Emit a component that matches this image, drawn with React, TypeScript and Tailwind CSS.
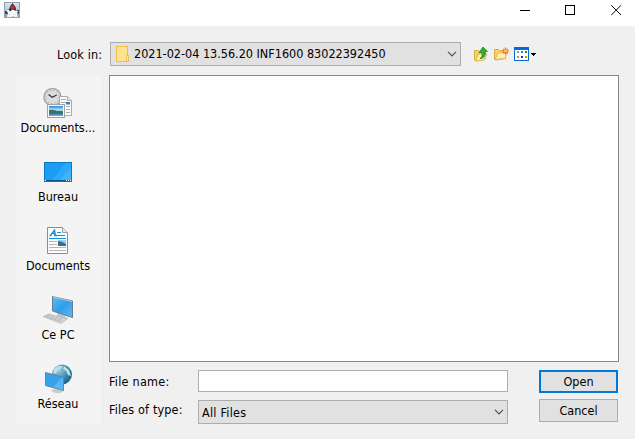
import React from 'react';

const Chevron = () => (
  <svg className="h-[6px] w-[10px] shrink-0" viewBox="0 0 10 6" fill="none">
    <path d="M1 .8 5 4.8 9 .8" stroke="#505050" strokeWidth="1.2" />
  </svg>
);

const JavaIcon = () => (
  <svg className="h-4 w-4" viewBox="0 0 16 16">
    <defs>
      <linearGradient id="jv" x1="0" y1="0" x2="0" y2="1">
        <stop offset="0" stopColor="#dce7f0" />
        <stop offset=".5" stopColor="#b5c7d6" />
        <stop offset="1" stopColor="#7f99ad" />
      </linearGradient>
    </defs>
    <rect x=".5" y=".5" width="15" height="15" fill="url(#jv)" stroke="#8fa3b5" />
    <path d="M1 9h3v3H1ZM12.500 8H15v3.500h-2.500Z" fill="#3f4347" />
    <path d="M2.500 9 5 7.500h7l2 2-1 1.500.5 4H10l-1-1-1 1H3l1-4Z" fill="#f6f7f7" />
    <path d="M5.500 7.500 6 4.500 8.500 1l3 4 1 4-3-1Z" fill="#3a3438" />
    <path d="M4.500 7.500 6.500 6l1 2-1 1.500Z" fill="#1f2124" />
    <ellipse cx="8.700" cy="5.700" rx="1.800" ry="2.100" fill="#dc2823" />
    <path d="M5 12.500h1M10.500 12.500h1" stroke="#c3c8cc" />
  </svg>
);

const RecentIcon = () => (
  <svg className="h-8 w-8" viewBox="0 0 32 32">
    <defs>
      <linearGradient id="sky" x1="0" y1="0" x2="0" y2="1">
        <stop offset="0" stopColor="#2787d8" />
        <stop offset=".42" stopColor="#c8e8f6" />
        <stop offset=".55" stopColor="#437e69" />
        <stop offset=".72" stopColor="#2467a5" />
        <stop offset="1" stopColor="#79b8df" />
      </linearGradient>
    </defs>
    <circle cx="10.500" cy="10" r="8.500" fill="#dcdddd" stroke="#a4a6a8" strokeWidth="1.500" />
    <circle cx="10.500" cy="10" r="6.500" fill="none" stroke="#999" strokeWidth="1" strokeDasharray="1 2.400" />
    <path d="m6.500 7.500 3.700 2.700 4.500-2.200" fill="none" stroke="#353535" strokeWidth="1.200" />
    <path d="M17.500 9.500h8l4 4v15h-12Z" fill="#fcfcfc" stroke="#a7a9aa" />
    <path d="M25.500 9.500v4h4" fill="#eee" stroke="#a7a9aa" />
    <path d="M19 12.500h5M19 15.500h5M24 19.500h4M24 22.500h4M24 25.500h4" stroke="#a8abad" />
    <path d="M24 15h4v2.500h-4Z" fill="#3683ba" />
    <rect x="5.500" y="17.500" width="17" height="13" fill="#fcfcfc" stroke="#a0a2a3" />
    <path d="M7 19h14v10H7Z" fill="url(#sky)" />
    <path d="M7 23q4-1 8 1l6 1v1H7Z" fill="#397567" />
  </svg>
);

const DesktopIcon = () => (
  <svg className="h-8 w-8" viewBox="0 0 32 32" shapeRendering="crispEdges">
    <rect x="2.500" y="6.500" width="27" height="19" fill="#1b9cf7" stroke="#0878bf" />
    <path d="M10 24 24 7h5v17Z" fill="#2ea8fc" />
    <path d="M18 24 29 12v12Z" fill="#42b2fd" />
    <path d="M3 24h26v1H3Z" fill="#075488" />
    <path d="M3 24h1v1H3ZM24 24h1v1h-1ZM26 24h1v1h-1ZM28 24h1v1h-1Z" fill="#fff" />
  </svg>
);

const DocumentIcon = () => (
  <svg className="h-8 w-8" viewBox="0 0 32 32">
    <path d="M5.500 2.500h15l5 5v21h-20Z" fill="#fcfcfc" stroke="#8b8d8e" />
    <path d="M20.500 2.500v5h5" fill="#e7e7e7" stroke="#9a9b9c" />
    <path d="m8.500 10.500 4-5.500 1 5.500M10 8.500h3M7.500 10.500h2M12 10.500h3" fill="none" stroke="#178bd5" strokeWidth="1.300" />
    <path d="M15 7.500h4M15 10.500h8M7 13.500h17" stroke="#1690d9" />
    <path d="M7 16.500h8M7 19.500h8M7 22.500h17M7 25.500h17" stroke="#b6b6b6" />
    <path d="M16 15h8v6h-8Z" fill="#a3cee8" />
    <path d="M16 16q4 0 8 3v2h-8Z" fill="#376f92" />
  </svg>
);

const ComputerIcon = () => (
  <svg className="h-8 w-8" viewBox="0 0 32 32">
    <defs>
      <linearGradient id="pc" x2="1" y2="1">
        <stop stopColor="#61bdf5" />
        <stop offset=".5" stopColor="#319de8" />
        <stop offset="1" stopColor="#61bafa" />
      </linearGradient>
    </defs>
    <path d="m15 21 1-3 7 2v3l4 1-4 2-9-3Z" fill="#c1c7ca" />
    <path d="M10.500 2.500 30.500 7v16.500l-20-6.500Z" fill="url(#pc)" stroke="#697c88" />
    <path d="m11 3 19 4.500" stroke="#bdcbd3" />
    <path d="M1 22.500 7 20l18 5-6 4.500Z" fill="#d7dadb" stroke="#aeb3b5" strokeWidth=".7" />
    <path d="m3 22.500 16 5M5 21.500l16 5M8 21l-4 2M12 22l-4 2.500M16 23l-4 2.500M20 24l-4 3" stroke="#a9afb2" strokeWidth=".6" />
  </svg>
);

const NetworkIcon = () => (
  <svg className="h-8 w-8" viewBox="0 0 32 32">
    <defs>
      <radialGradient id="globe" cx=".35" cy=".3" r=".8">
        <stop stopColor="#91cde2" />
        <stop offset=".6" stopColor="#3484ab" />
        <stop offset="1" stopColor="#18597f" />
      </radialGradient>
    </defs>
    <circle cx="20" cy="11.500" r="10" fill="url(#globe)" />
    <path d="m12 6 4-3 5 0-2 3-3 1-2 4-3-1ZM22 3l5 4 2 6-3-1-2-4-3-2Z" fill="#c0dde4" />
    <path d="m9 27 4-1 1-4 5 2v3l3 1-4 2q-6 1-9-3Z" fill="#c5cdd1" />
    <path d="m3.500 9.500 18 5v13l-18-5Z" fill="#35a2ec" stroke="#6d8593" />
    <path d="m11 24 9-9 1 .5V27Z" fill="#57b7f7" />
  </svg>
);

const UpFolderIcon = () => (
  <svg className="h-4 w-4" viewBox="0 0 16 16">
    <path d="M1.500 4.500h4l1 1h6v7l-9 2.500-2-1Z" fill="#f5d45f" stroke="#d9b04a" />
    <path d="m2.500 15 2.500-7h9l-3 6Z" fill="#fff0a3" stroke="#dfb24c" />
    <path d="M7 12.500c2-1 2.500-3 2-6H6L10 1l4.500 4.500H12c.8 4-1 7-5 7Z" fill="#35ab33" stroke="#1f8624" strokeWidth=".8" />
  </svg>
);

const NewFolderIcon = () => (
  <svg className="h-4 w-4" viewBox="0 0 16 16">
    <path d="M1.500 3.500h4l1 1h6v8l-10 1.500-1-1Z" fill="#f6d66c" stroke="#dba94a" />
    <path d="m2 13.500 3-6.500 9-1-2 6.500Z" fill="#fff0ae" stroke="#e2b75a" />
    <path d="M12.500 1.500v7M9 5h7M10.300 2.800l4.500 4.500M14.800 2.800l-4.500 4.500" stroke="#ee5f2c" strokeWidth="1.200" />
    <circle cx="12.500" cy="5" r="1.400" fill="#ffd74e" />
  </svg>
);

const ViewIcon = () => (
  <svg className="h-[14px] w-[23px]" viewBox="0 0 23 14" shapeRendering="crispEdges">
    <path d="M0 0h15v14H0Z" fill="#0869ce" />
    <path d="M1 3h13v10H1Z" fill="#fff" />
    <path d="M3 4h2v2H3Z" fill="#9b91bd" />
    <path d="M7 4h2v2H7Z" fill="#168ad8" />
    <path d="M11 4h2v2h-2Z" fill="#129020" />
    <path d="M3 9h2v2H3Z" fill="#f27759" />
    <path d="M7 9h2v2H7Z" fill="#173b9b" />
    <path d="M11 9h2v2h-2Z" fill="#c8a10b" />
    <path d="M17 6h5v1h-1v1h-1v1h-1V8h-1V7h-1Z" fill="#000" />
  </svg>
);

const places = [
  { name: 'Documents...', icon: <RecentIcon /> },
  { name: 'Bureau', icon: <DesktopIcon /> },
  { name: 'Documents', icon: <DocumentIcon /> },
  { name: 'Ce PC', icon: <ComputerIcon /> },
  { name: 'Réseau', icon: <NetworkIcon /> },
];

export default function App() {
  return (
    <div className="flex h-[439px] w-[635px] flex-col overflow-hidden bg-[#f0f0f0] font-['DejaVu_Sans_Condensed','DejaVu_Sans',sans-serif] text-[12.5px] leading-4 text-black">
      <header className="flex h-[26px] shrink-0 items-start justify-between bg-white pt-[2px] pr-[13px] pl-1">
        <JavaIcon />
        <div className="flex pt-[3px]">
          <svg className="mr-[34px] h-[11px] w-[11px]" viewBox="0 0 11 11"><path d="M0 5.500h10" stroke="#000" /></svg>
          <svg className="mr-[35px] h-[11px] w-[11px]" viewBox="0 0 11 11"><rect x=".5" y=".5" width="9" height="9" fill="none" stroke="#000" /></svg>
          <svg className="h-[11px] w-[11px]" viewBox="0 0 11 11"><path d="m.3.3 9.700 9.700M10 .3.3 10" stroke="#000" /></svg>
        </div>
      </header>
      <div className="flex h-[49px] shrink-0 items-start pt-4">
        <div className="w-[110px] pt-[5px] pl-[57px] tracking-[0.15px]">Look in:</div>
        <div className="flex h-6 w-[351px] items-center border border-[#adadad] bg-[#e1e1e1] pr-[3px] pl-[5px]">
          <svg className="mr-1 h-4 w-[14px]" viewBox="0 0 14 16" shapeRendering="crispEdges">
            <path d="M.5.5h11v9h1v6H.5Z" fill="#ffe391" stroke="#eac348" />
            <path d="M10.500 9.500h2v6h-2Z" fill="#ffe99f" stroke="#eac348" />
          </svg>
          <span className="flex-1 whitespace-nowrap">2021-02-04 13.56.20 INF1600 83022392450</span>
          <Chevron />
        </div>
        <div className="flex items-start pt-1 pl-3">
          <UpFolderIcon />
          <div className="mr-[5px] ml-1"><NewFolderIcon /></div>
          <div className="pt-[1px]"><ViewIcon /></div>
        </div>
      </div>
      <main className="flex h-[364px] gap-2 pl-4">
        <nav className="h-[349px] w-[85px] bg-[#f4f4f4] pt-3 pr-[1px]">
          {places.map((p) => (
            <div key={p.name} className="flex h-[69px] flex-col items-center gap-[1px]">
              {p.icon}
              <span className="whitespace-nowrap">{p.name}</span>
            </div>
          ))}
        </nav>
        <section className="flex flex-col">
          <div className="h-[287px] w-[510px] border border-[#828790] bg-white" />
          <div className="flex pt-2">
            <div className="flex w-[399px] flex-col gap-2">
              <div className="flex h-[22px]">
                <label className="w-[89px] pt-1 tracking-[0.25px]">File name:</label>
                <input className="h-[22px] w-[310px] border border-[#abadb3] bg-white outline-none" />
              </div>
              <div className="flex h-6">
                <label className="w-[89px] pt-[2px] tracking-[0.15px]">Files of type:</label>
                <div className="flex h-6 w-[310px] items-center justify-between border border-[#adadad] bg-[#e1e1e1] pr-[3px] pl-[3px]">
                  <span className="pt-px tracking-[0.25px]">All Files</span>
                  <Chevron />
                </div>
              </div>
            </div>
            <div className="flex flex-col gap-[6px] pl-[31px]">
              <button className="h-[23px] w-[79px] border-2 border-[#0078d7] bg-[#e1e1e1] leading-4">Open</button>
              <button className="h-[23px] w-[79px] border border-[#adadad] bg-[#e1e1e1] leading-4">Cancel</button>
            </div>
          </div>
        </section>
      </main>
    </div>
  );
}
